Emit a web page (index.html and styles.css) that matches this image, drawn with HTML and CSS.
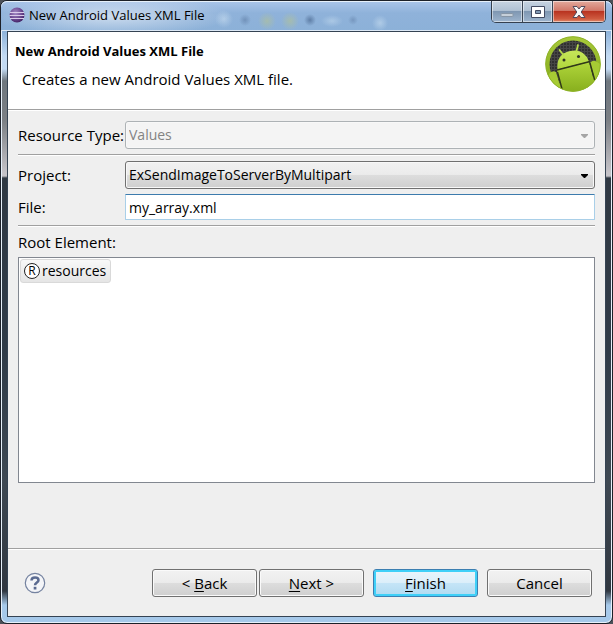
FILE: index.html
```html
<!DOCTYPE html>
<html lang="en">
<head>
<meta charset="utf-8">
<title>New Android Values XML File</title>
<link rel="stylesheet" href="styles.css">
</head>
<body>
<div class="window">
  <header class="titlebar">
    <svg class="app-icon" viewBox="0 0 16 16" aria-hidden="true">
      <defs><radialGradient id="orb" cx=".4" cy=".35" r=".7"><stop offset="0" stop-color="#a58cc6"/><stop offset=".6" stop-color="#6b4891"/><stop offset="1" stop-color="#3f2060"/></radialGradient></defs>
      <circle cx="8" cy="8" r="7.5" fill="url(#orb)"/>
      <path d="M1 5.500h14M.5 8.500h15M1 11.500h14" stroke="#d9cbe9"/>
    </svg>
    <span class="caption">New Android Values XML File</span>
    <div class="controls">
      <button class="control" type="button" aria-label="Minimize">
        <svg class="minimize" width="14" height="6" viewBox="0 0 14 6"><rect x="1" y="1.500" width="12" height="3" rx=".5" fill="#c6d0da" stroke="#8796a6"/></svg>
      </button>
      <button class="control" type="button" aria-label="Maximize">
        <svg width="14" height="12" viewBox="0 0 14 12"><path fill-rule="evenodd" d="M.5.500h13v11H.5zM4.500 4.500h5v3h-5z" fill="#fff" stroke="#434b62"/></svg>
      </button>
      <button class="control control-close" type="button" aria-label="Close">
        <svg width="14" height="12" viewBox="0 0 14 12"><path d="M1 .5h4l2 2.500 2-2.500h4L9.200 6l3.800 5.500H9L7 9l-2 2.500H1L4.800 6z" fill="#f8f8f8" stroke="#514a5c"/></svg>
      </button>
    </div>
  </header>

  <main class="dialog">
    <section class="banner">
      <div>
        <h1>New Android Values XML File</h1>
        <p>Creates a new Android Values XML file.</p>
      </div>
      <svg class="android" viewBox="0 0 56 56" aria-hidden="true">
        <defs>
          <linearGradient id="ring" x2="0" y2="1"><stop offset="0" stop-color="#a8c93a"/><stop offset="1" stop-color="#7fa618"/></linearGradient>
          <linearGradient id="bot" x2="0" y2="1"><stop offset="0" stop-color="#c6e65a"/><stop offset="1" stop-color="#b0d63b"/></linearGradient>
          <linearGradient id="body" x2="0" y2="1"><stop offset="0" stop-color="#b0d63b"/><stop offset="1" stop-color="#86ad1c"/></linearGradient>
          <pattern id="mesh" width="3" height="3" patternUnits="userSpaceOnUse"><rect width="3" height="3" fill="#303030"/><path d="M0 .5h3M.5 0v3" stroke="#464646"/></pattern>
          <clipPath id="disc"><circle cx="28" cy="28" r="27.500"/></clipPath>
        </defs>
        <g clip-path="url(#disc)">
          <circle cx="28" cy="28" r="28" fill="url(#ring)"/>
          <circle cx="28" cy="28" r="23.500" fill="url(#mesh)"/>
          <path d="M12 34 44 26 50 49 29 57 16 53z" fill="url(#body)"/>
          <path d="M4 38q3-4 7-2l6 20H5zM45 27q3-4 7-1l5 3-5 21z" fill="#a6cb34"/>
          <path d="M12.500 33.500Q11 18 25 15 39 12 44 25.500z" fill="url(#bot)"/>
          <path d="m18.500 19-4-5M31.500 15l1.500-6" stroke="#b8dc4c" stroke-width="1.800" stroke-linecap="round"/>
          <path d="m12 34 33-8.500M12.500 36 17 53M45 27l5 18" stroke="#303918" stroke-width="1.400" fill="none"/>
          <circle cx="19" cy="24" r="1.500" fill="#303426"/><circle cx="33.500" cy="20.500" r="1.500" fill="#303426"/>
        </g>
        <circle cx="28" cy="28" r="27.300" fill="none" stroke="#8fb329"/>
      </svg>
    </section>

    <form class="form">
      <div class="row">
        <label for="type">Resource Type:</label>
        <div class="combo">
          <select id="type" disabled><option>Values</option></select>
          <svg class="arrow" viewBox="0 0 7 4" aria-hidden="true"><path d="M0 0h7v1L4 4H3L0 1z" fill="#a5a5a5"/></svg>
        </div>
      </div>
      <hr>
      <div class="row">
        <label for="project">Project:</label>
        <div class="combo">
          <select id="project"><option>ExSendImageToServerByMultipart</option></select>
          <svg class="arrow" viewBox="0 0 7 4" aria-hidden="true"><path d="M0 0h7v1L4 4H3L0 1z"/></svg>
        </div>
      </div>
      <div class="row row-file">
        <label for="file">File:</label>
        <input id="file" type="text" value="my_array.xml">
      </div>
      <hr>
      <div class="list-label" id="root-label">Root Element:</div>
      <div class="list" role="listbox" aria-labelledby="root-label">
        <div class="item" role="option" aria-selected="true" tabindex="0">
          <span class="badge">R</span>resources
        </div>
      </div>
    </form>

    <footer class="actions">
      <button class="help" type="button" aria-label="Help">
        <svg viewBox="0 0 22 22"><circle cx="11" cy="11" r="9.700" fill="#f4f5f8" stroke="#7583a0" stroke-width="1.200"/><path d="M7.500 8.500Q7.500 5.500 11 5.500t3.500 2.700c0 2.200-3.500 2.300-3.500 5" fill="none" stroke="#5b6b91" stroke-width="2.500"/><rect x="9.700" y="14.800" width="2.700" height="2.700" fill="#5b6b91"/></svg>
      </button>
      <div class="steps">
        <button class="btn" type="button">&lt; <u>B</u>ack</button>
        <button class="btn" type="button"><u>N</u>ext &gt;</button>
      </div>
      <button class="btn btn-default" type="button"><u>F</u>inish</button>
      <button class="btn" type="button">Cancel</button>
    </footer>
  </main>
</div>
</body>
</html>
```
FILE: styles.css
```css
* { box-sizing: border-box; }

body {
  margin: 0;
  background: #4b5058;
  color: #000;
  font: 15px/20px "Open Sans", "Noto Sans", sans-serif;
}

button, input, select { font: inherit; color: inherit; }

.window {
  display: flex;
  flex-direction: column;
  min-height: 100vh;
  padding: 0 6px 6px;
  border: 1px solid #1c2028;
  border-radius: 7px;
  background:
    linear-gradient(#a9c6e8, #8db2da 30px, #c3daf2 55px, #c3daf2 68px, #6f777e 80px, #7c8085 120px, #c5c3c8 172px, #c5c3c8 175px, #303943 177px, #303b48 350px, #3f4953 480px, #303740 590px, #a6c9ea 604px, #a6c9ea);
  box-shadow: inset 0 0 0 1px #e6f0fa;
}

.titlebar {
  display: flex;
  align-items: flex-start;
  height: 30px;
  margin: 0 -6px;
  padding: 0 6px 0 8px;
  background:
    radial-gradient(ellipse 120px 20px at 110px 15px, rgba(225, 234, 245, .75), transparent),
    radial-gradient(circle 9px at 223px 18px, rgba(190, 214, 236, .7), transparent),
    radial-gradient(circle 6px at 244px 19px, rgba(95, 125, 165, .6), transparent),
    radial-gradient(circle 9px at 266px 20px, rgba(170, 190, 165, .8), transparent),
    radial-gradient(circle 9px at 289px 20px, rgba(170, 190, 165, .8), transparent),
    radial-gradient(circle 6px at 309px 19px, rgba(75, 105, 145, .7), transparent),
    radial-gradient(ellipse 11px 6px at 331px 20px, rgba(190, 214, 236, .6), transparent),
    radial-gradient(circle 5px at 352px 19px, rgba(95, 125, 165, .5), transparent),
    radial-gradient(circle 8px at 379px 22px, rgba(190, 214, 236, .7), transparent),
    linear-gradient(#aac5e9, #8fb2da 40%, #8cb1d8);
  border-radius: 6px 6px 0 0;
  box-shadow: inset 0 1px #e6f0fa, inset 0 -1px #dce8f5;
}

.app-icon { width: 16px; height: 16px; margin-top: 6px; }

.caption {
  flex: 1;
  padding: 4px 0 0 4px;
  font-size: 13px;
}

.controls {
  display: flex;
  overflow: hidden;
  border: 1px solid #35404f;
  border-top: 0;
  border-radius: 0 0 5px 5px;
}

.control {
  display: grid;
  place-items: center;
  width: 30px;
  height: 21px;
  padding: 0;
  border: 0;
  background: linear-gradient(#c7d4e2, #b0c1d3 45%, #7f97b2 50%, #9eb5ce);
  box-shadow: inset 0 0 0 1px rgba(255, 255, 255, .5);
}

.control + .control { border-left: 1px solid #3b4756; }

.minimize { margin-top: 6px; }

.control-close {
  width: 53px;
  background: linear-gradient(#e3aa9d, #d2796a 45%, #b93421 50%, #cf5b40 85%, #e08a6c);
}

.dialog {
  flex: 1;
  display: flex;
  flex-direction: column;
  border: 1px solid #354353;
  background: #efefef;
}

.banner {
  display: flex;
  justify-content: space-between;
  height: 79px;
  padding: 4px 4px 0 7px;
  border-bottom: 1px solid #fff;
  background: #fff;
  box-shadow: inset 0 -1px #a0a0a0;
}

.banner h1 {
  margin: 5px 0 8px;
  font-size: 13px;
  line-height: 20px;
}

.banner p { margin: 0 7px; }

.android { width: 56px; height: 56px; }

.form {
  flex: 1;
  display: flex;
  flex-direction: column;
  padding: 10px 10px 65px;
}

.row {
  display: grid;
  grid-template-columns: 107px 1fr;
  align-items: center;
}

.row-file { margin-top: 5px; }

hr {
  width: 100%;
  height: 2px;
  margin: 5px 0;
  border: 0;
  border-top: 1px solid #a0a0a0;
  background: #fff;
}

.combo { position: relative; }

.combo select {
  display: block;
  width: 100%;
  height: 28px;
  padding: 0 24px 0 3px;
  appearance: none;
  border: 1px solid #707070;
  border-radius: 3px;
  background: linear-gradient(#f2f2f2, #ebebeb 48%, #dddddd 50%, #cfcfcf);
  box-shadow: inset 0 0 0 1px #f8f8f8;
  font-size: 14px;
}

.combo select:disabled {
  border-color: #adb2b5;
  background: #f4f4f4;
  color: #838383;
  opacity: 1;
}

.arrow {
  position: absolute;
  top: 13px;
  right: 7px;
  width: 7px;
  height: 4px;
  pointer-events: none;
}

.row input {
  width: 100%;
  height: 26px;
  padding: 0 3px;
  border: 1px solid #a9cfe8;
  border-top-color: #3d7bad;
  border-radius: 1px;
  outline: 0;
  background: #fff;
  font-size: 14px;
}

.list-label { margin-bottom: 5px; }

.list {
  flex: 1;
  padding: 1px;
  border: 1px solid #828790;
  background: #fff;
}

.item {
  display: inline-flex;
  align-items: center;
  height: 24px;
  padding: 0 4px 0 3px;
  border: 1px solid #d9d9d9;
  border-radius: 3px;
  background: linear-gradient(#f8f8f8, #e5e5e5);
  font-size: 14px;
}

.badge {
  width: 16px;
  height: 16px;
  margin-right: 2px;
  border: 1px solid #222;
  border-radius: 50%;
  background: #fff;
  font-size: 12px;
  line-height: 13px;
  text-align: center;
}

.actions {
  display: flex;
  align-items: center;
  gap: 9px;
  padding: 20px 13px 19px 16px;
  border-top: 1px solid #a0a0a0;
  box-shadow: inset 0 1px #fff;
}

.help {
  width: 22px;
  height: 22px;
  margin-right: auto;
  padding: 0;
  border: 0;
  background: none;
}

.help svg { display: block; }

.steps { display: flex; gap: 2px; }

.btn {
  width: 105px;
  height: 28px;
  padding: 0;
  border: 1px solid #707070;
  border-radius: 3px;
  background: linear-gradient(#f2f2f2, #ebebeb 48%, #dddddd 50%, #cfcfcf);
  box-shadow: inset 0 0 0 1px #fafafa;
}

.btn-default {
  border-color: #3c7fb1;
  background: linear-gradient(#eaf5fb, #dceffa 48%, #c5e5f7 50%, #b0daf1);
  box-shadow: inset 0 0 0 2px #3fd0f8;
}

.btn u { text-underline-offset: 2px; }
```
